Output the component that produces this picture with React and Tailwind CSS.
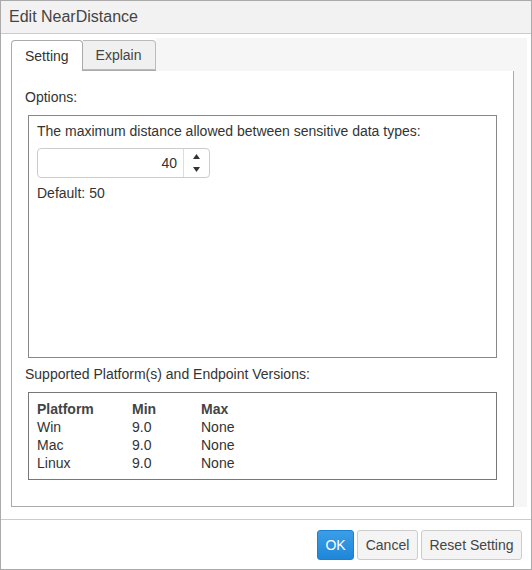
import React from 'react';

const rows = [
  { platform: 'Win', min: '9.0', max: 'None' },
  { platform: 'Mac', min: '9.0', max: 'None' },
  { platform: 'Linux', min: '9.0', max: 'None' },
];

function Spinner({ value }) {
  return (
    <div className="flex w-[173px] h-[30px] border border-[#ccc] rounded-[4px] bg-white">
      <div className="flex-1 flex items-center justify-end pr-[6px] text-[14px] text-[#333]">{value}</div>
      <div className="w-[26px] border-l border-[#ddd] flex flex-col items-center justify-center gap-[8px]">
        <svg width="7" height="5" viewBox="0 0 7 5"><path d="M3.5 0 L7 5 L0 5 Z" fill="#333" /></svg>
        <svg width="7" height="5" viewBox="0 0 7 5"><path d="M0 0 L7 0 L3.5 5 Z" fill="#333" /></svg>
      </div>
    </div>
  );
}

export default function App() {
  return (
    <div className="w-[532px] h-[570px] border border-[#aaa] bg-white flex flex-col font-['Liberation_Sans',Arial,sans-serif] text-[#333] text-[14px] leading-[18px]">
      {/* Header */}
      <div className="h-[33px] shrink-0 bg-[#f2f2f2] border-b border-[#ccc] flex items-center pl-[8px] text-[16px] text-[#444]">
        Edit NearDistance
      </div>

      {/* Body */}
      <div className="h-[485px] shrink-0 pl-[10px] pr-[4px] pt-[4px]">
        <div className="bg-[#f6f6f6] pr-[13px]">
          <div className="flex pt-[2px] bg-white">
            <div className="h-[31px] px-[13px] flex items-center border border-[#aaa] border-b-0 rounded-t-[4px] bg-white relative z-10 text-[#333]">
              Setting
            </div>
            <div className="h-[30px] px-[13px] flex items-center border border-[#bbb] border-l-0 rounded-tr-[4px] bg-[#f0f0f0] text-[#444]">
              Explain
            </div>
            <div className="flex-1 bg-[#f6f6f6] -mt-[2px]"></div>
          </div>

          {/* Panel */}
          <div className="h-[437px] border border-[#aaa] -mt-[1px] bg-white pt-[17px] pl-[13px] pr-[16px]">
            <div>Options:</div>
            <div className="mt-[9px] ml-[3px] h-[243px] border border-[#888] pt-[6px] pl-[8px]">
              <div>The maximum distance allowed between sensitive data types:</div>
              <div className="mt-[8px]">
                <Spinner value="40" />
              </div>
              <div className="mt-[6px]">Default: 50</div>
            </div>

            <div className="mt-[7px]">Supported Platform(s) and Endpoint Versions:</div>
            <div className="mt-[9px] ml-[3px] h-[88px] border border-[#777] pt-[7px] pl-[8px]">
              <div className="flex font-bold text-[#444]">
                <div className="w-[95px]">Platform</div>
                <div className="w-[69px]">Min</div>
                <div>Max</div>
              </div>
              {rows.map((r) => (
                <div key={r.platform} className="flex">
                  <div className="w-[95px]">{r.platform}</div>
                  <div className="w-[69px]">{r.min}</div>
                  <div>{r.max}</div>
                </div>
              ))}
            </div>
          </div>
        </div>
      </div>

      {/* Footer */}
      <div className="flex-1 border-t border-[#ccc] flex items-center justify-end gap-[3px] pr-[9px]">
        <button className="w-[37px] h-[30px] rounded-[3px] border border-[#1c7fd0] bg-gradient-to-b from-[#3a9ee8] to-[#1f86d8] text-white text-[14px]">
          OK
        </button>
        <button className="w-[61px] h-[30px] rounded-[3px] border border-[#ccc] bg-[#f4f4f4] text-[#444] text-[14px]">
          Cancel
        </button>
        <button className="w-[101px] h-[30px] rounded-[3px] border border-[#ccc] bg-[#f4f4f4] text-[#444] text-[14px]">
          Reset Setting
        </button>
      </div>
    </div>
  );
}
